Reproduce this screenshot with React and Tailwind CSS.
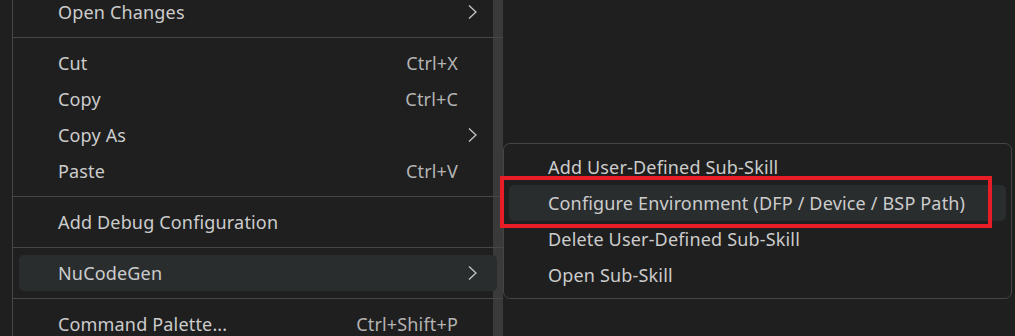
const font = "font-['Noto_Sans','Open_Sans',sans-serif]";

function Chevron() {
  return (
    <svg width="11" height="16" viewBox="0 0 11 16" fill="none" className="text-[#c5c5c5]">
      <path d="M2 1.5L9 8L2 14.5" stroke="currentColor" strokeWidth="1.3" />
    </svg>
  );
}

function Item({ label, shortcut, sub, active }) {
  return (
    <div
      className={`mx-[6px] flex h-[36px] items-center rounded-[5px] pl-[39px] pr-[19px] ${
        active ? "bg-[#2a2d2e]" : ""
      }`}
    >
      <span className="flex-1 whitespace-nowrap text-[#cccccc]">{label}</span>
      {shortcut && <span className="whitespace-nowrap text-[#b4b4b4]">{shortcut}</span>}
      <span className="flex w-[20px] justify-end">{sub && <Chevron />}</span>
    </div>
  );
}

function Separator() {
  return (
    <div className="py-[7px]">
      <div className="h-px bg-[#474747]" />
    </div>
  );
}

function SubItem({ label, active }) {
  return (
    <div
      className={`mx-[5px] flex h-[36px] items-center rounded-[5px] pl-[39px] ${
        active ? "bg-[#2a2d2e]" : ""
      }`}
    >
      <span className="whitespace-nowrap text-[#cccccc]">{label}</span>
    </div>
  );
}

export default function App() {
  return (
    <div
      className={`relative h-[336px] w-[1015px] overflow-hidden bg-[#1f1f1f] text-[18px] tracking-[0.17px] ${font}`}
    >
      {/* main context menu */}
      <div className="relative ml-[12px] mt-[-6px] w-[491px] border-l border-[#454545]">
        <div className="absolute bottom-0 right-0 top-0 w-[10px] bg-[#3a3a3a]" />
        <div className="relative">
          <Item label="Open Changes" sub />
          <Separator />
          <Item label="Cut" shortcut="Ctrl+X" />
          <Item label="Copy" shortcut="Ctrl+C" />
          <Item label="Copy As" sub />
          <Item label="Paste" shortcut="Ctrl+V" />
          <Separator />
          <Item label="Add Debug Configuration" />
          <Separator />
          <Item label="NuCodeGen" sub active />
          <Separator />
          <Item label="Command Palette..." shortcut="Ctrl+Shift+P" />
        </div>
      </div>

      {/* submenu */}
      <div className="absolute left-[503px] top-[143px] w-[509px] rounded-[7px] border border-[#454545] bg-[#1f1f1f] py-[5px]">
        <SubItem label="Add User-Defined Sub-Skill" />
        <SubItem label="Configure Environment (DFP / Device / BSP Path)" active />
        <SubItem label="Delete User-Defined Sub-Skill" />
        <SubItem label="Open Sub-Skill" />
      </div>

      {/* highlight annotation */}
      <div className="absolute left-[500px] top-[176px] h-[52px] w-[492px] border-4 border-[#e81d25]" />
    </div>
  );
}
